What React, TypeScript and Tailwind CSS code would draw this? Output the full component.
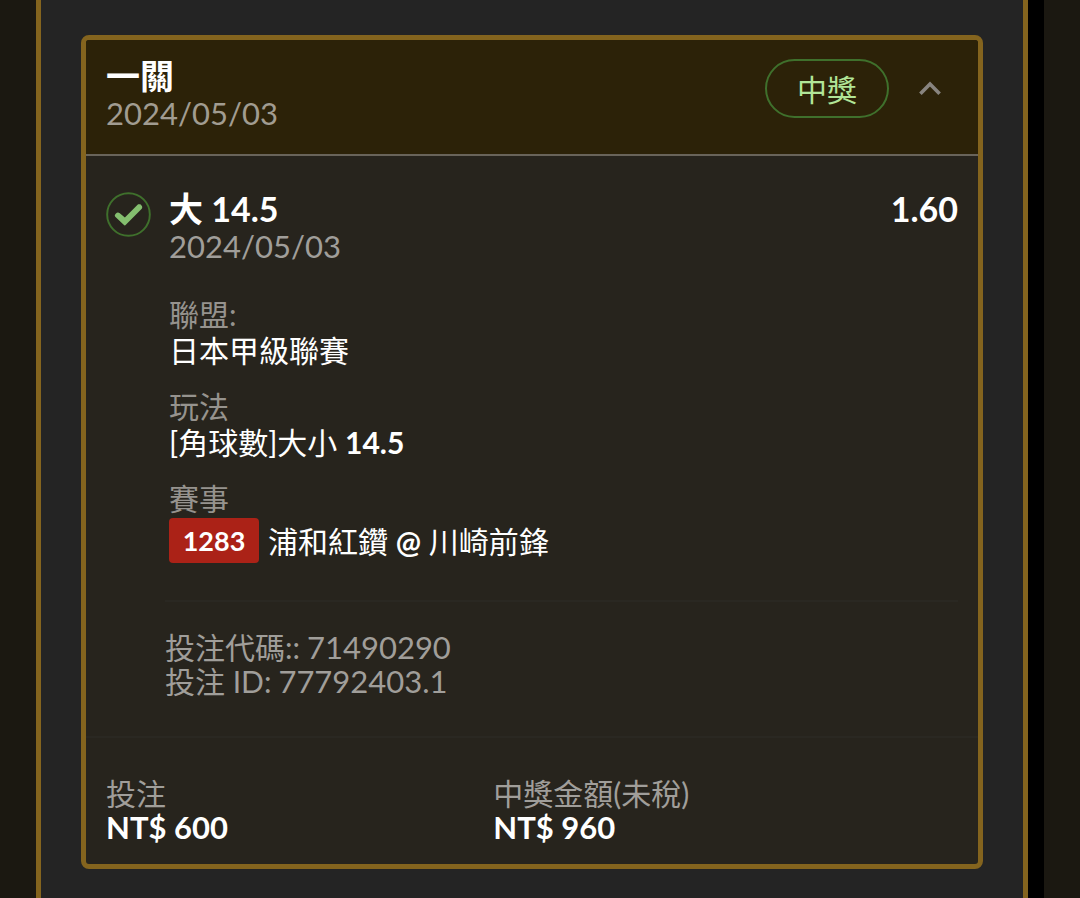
import { useState } from 'react';

const FIELDS = [
  { label: '聯盟:', value: '日本甲級聯賽' },
  { label: '玩法', value: '[角球數]大小', bold: '14.5' },
];

const CODES = [
  { label: '投注代碼::', value: '71490290' },
  { label: '投注 ID:', value: '77792403.1' },
];

const TOTALS = [
  { label: '投注', amount: 'NT$ 600' },
  { label: '中獎金額(未稅)', amount: 'NT$ 960' },
];

function CheckBadge() {
  return (
    <svg viewBox="0 0 46 46" className="mt-px w-[45px] h-[45px] shrink-0" fill="none" aria-hidden="true">
      <circle cx="23" cy="23" r="21.8" stroke="#3f702c" strokeWidth="2" />
      <path
        d="M9.9 22.2c-1.2 1.2-1.2 2.4-.2 3.4l8.4 8c.7.7 1.5.7 2.2 0l16-16.2c1.1-1.1.9-2.5 0-3.6l-1.2-1.4h-2.3L19.3 26l-5.2-4.4c-1.6-1-2.8-.8-4.2.6z"
        fill="#84bf6f"
      />
    </svg>
  );
}

export default function App() {
  const [open, setOpen] = useState(true);

  return (
    <div className="flex min-h-screen bg-[#1b1811] px-9 font-['Lato','Noto_Sans_CJK_TC',sans-serif] text-[30px] leading-9 text-white">
      <main className="flex-1 border-x-[5px] border-[#84641e] bg-[#242424] px-10 pt-[35px] pb-[30px]">
        <article className="overflow-hidden rounded-lg border-[5px] border-[#84641e] bg-[#27241d]">
          <header className="flex justify-between border-b-2 border-[#69645a] bg-[#2c2208] px-5 pt-[19px] pb-[21px]">
            <div>
              <h2 className="text-[34px] leading-[34px] font-bold">一關</h2>
              <p className="text-[31px] leading-10 text-[#a19c91]">2024/05/03</p>
            </div>
            <div className="flex h-[59px] items-center">
              <span className="flex h-[59px] w-[124px] items-center justify-center rounded-full border-2 border-[#3f702c] text-[#b1e597]">
                中獎
              </span>
              <button
                type="button"
                aria-label="收合"
                aria-expanded={open}
                onClick={() => setOpen(!open)}
                className="ml-[30px] mr-[17px]"
              >
                <svg viewBox="0 0 22 16" className={open ? 'w-[22px] h-4' : 'w-[22px] h-4 rotate-180'} fill="none">
                  <path d="M1.4 12.8L11 3l9.6 9.8" stroke="#88847f" strokeWidth="3.6" />
                </svg>
              </button>
            </div>
          </header>

          {open && (
            <section className="flex gap-[18px] pt-[35px] pr-5 pl-5">
              <CheckBadge />
              <div className="flex-1">
                <div className="flex justify-between text-[34px] leading-9 font-bold">
                  <h3>大 14.5</h3>
                  <span>1.60</span>
                </div>
                <p className="text-[31px] leading-[38px] text-[#a09e9a]">2024/05/03</p>

                <dl className="mt-[31px] space-y-5">
                  {FIELDS.map((f) => (
                    <div key={f.label}>
                      <dt className="text-[#96938e]">{f.label}</dt>
                      <dd>
                        {f.value} {f.bold && <b>{f.bold}</b>}
                      </dd>
                    </div>
                  ))}
                  <div>
                    <dt className="text-[#96938e]">賽事</dt>
                    <dd className="flex items-center gap-[9px] pt-0.5">
                      <span className="flex h-[45px] w-[90px] items-center justify-center rounded-sm bg-[#ab2217] text-[27px] font-bold">
                        1283
                      </span>
                      <span>
                        浦和紅鑽 <b>@</b> 川崎前鋒
                      </span>
                    </dd>
                  </div>
                </dl>
              </div>
            </section>
          )}

          {open && (
            <div className="mt-[37px] mr-5 ml-[79px] border-t-2 border-[#2a2822] pt-7 pb-[38px] text-[#a09e9a]">
              {CODES.map((c) => (
                <p key={c.label} className="flex gap-[7px] leading-[34px]">
                  <span>{c.label}</span>
                  <span className="text-[31px]">{c.value}</span>
                </p>
              ))}
            </div>
          )}

          <footer className="grid grid-cols-[5fr_6fr] border-t-2 border-[#2a2822] px-5 pt-[38px] pb-5">
            {TOTALS.map((t) => (
              <div key={t.label}>
                <p className="leading-[34px] text-[#a09e9a]">{t.label}</p>
                <p className="text-[31px] leading-[34px] font-bold">{t.amount}</p>
              </div>
            ))}
          </footer>
        </article>
      </main>
      <div className="w-4 bg-black" />
    </div>
  );
}
